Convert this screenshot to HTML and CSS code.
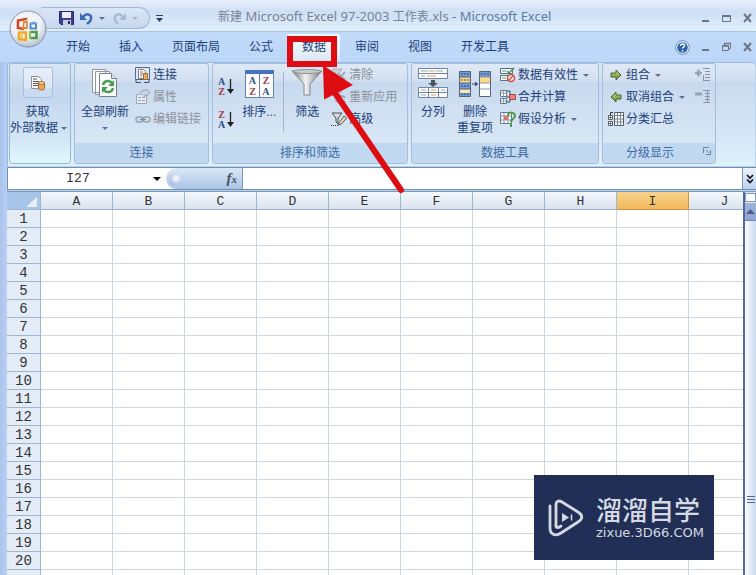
FILE: index.html
```html
<!DOCTYPE html>
<html lang="zh-CN">
<head>
<meta charset="utf-8">
<title>新建 Microsoft Excel 97-2003 工作表.xls - Microsoft Excel</title>
<link rel="stylesheet" href="styles.css">
</head>
<body>
<svg width="0" height="0" class="defs" aria-hidden="true">
  <defs>
    <linearGradient id="gray" x1="0" x2="1"><stop offset="0" stop-color="#6f7174"/><stop offset=".45" stop-color="#f4f4f2"/><stop offset="1" stop-color="#77787a"/></linearGradient>
    <linearGradient id="green" x1="0" y1="0" x2="0" y2="1"><stop offset="0" stop-color="#c5dc84"/><stop offset="1" stop-color="#5a8b28"/></linearGradient>
    <radialGradient id="orb" cx=".45" cy=".35" r=".7"><stop offset="0" stop-color="#fff"/><stop offset=".6" stop-color="#eceff4"/><stop offset="1" stop-color="#a9b5c8"/></radialGradient>
  </defs>
</svg>
<div class="window">
  <header class="titlebar">
    <div class="quick">
      <button aria-label="保存"><svg width="15" height="14" viewBox="0 0 15 14"><path d="M.5.5h14v13H2l-1.500-1.500z" fill="#3c3f98" stroke="#25276b"/><path d="M3 1h9v6H3z" fill="#e9f0fb"/><path d="M4 9h8v5H4z" fill="#c8cede"/><path d="M9 10h2v3H9z" fill="#25276b"/></svg></button>
      <button aria-label="撤消"><svg width="13" height="13" viewBox="0 0 13 13"><path d="M3 5c4-5 9-2 8 2-.5 3-3 4-4 5" fill="none" stroke="#3a69b8" stroke-width="2.400"/><path d="M0 1v7h7z" fill="#3a69b8"/></svg></button>
      <i class="caret"></i>
      <button aria-label="恢复"><svg width="13" height="13" viewBox="0 0 13 13"><path d="M10 5C6 0 1 3 2 7c.5 3 2 4 3 5" fill="none" stroke="#a9b9cf" stroke-width="2.400"/><path d="M13 1v7H6z" fill="#a9b9cf"/></svg></button>
      <i class="caret pale"></i>
    </div>
    <button class="more" aria-label="自定义快速访问工具栏"><svg width="7" height="7" viewBox="0 0 7 7"><path d="M0 .5h7" stroke="#294063"/><path d="M0 3h7L3.500 7z" fill="#294063"/></svg></button>
    <h1><span><b>新建</b> Microsoft Excel 97-2003 <b>工作表</b>.xls</span> - Microsoft Excel</h1>
    <div class="winbtns">
      <button aria-label="最小化"><svg width="8" height="10" viewBox="0 0 8 10"><path d="M0 8h7" stroke="#6c7583" stroke-width="2"/></svg></button>
      <button aria-label="最大化"><svg width="9" height="10" viewBox="0 0 9 10"><path d="M.5 2.500h8v6h-8z" fill="none" stroke="#6c7583"/><path d="M0 3h9" stroke="#6c7583" stroke-width="2"/></svg></button>
      <button aria-label="关闭"><svg width="9" height="10" viewBox="0 0 9 10"><path d="M1 1l7 8M8 1L1 9" stroke="#6c7583" stroke-width="2"/></svg></button>
    </div>
  </header>

  <button class="office" aria-label="Office 按钮"><svg width="38" height="38" viewBox="0 0 38 38">
    <circle cx="19" cy="19" r="18" fill="url(#orb)" stroke="#8494ae"/>
    <g fill="none" stroke-width="2.600">
      <path d="M17 10V9L9 10.500V18l6 1" stroke="#cf4b26"/><path d="M15 12h3v6h-4z" stroke="#e88443" stroke-width="1.800"/>
      <path d="M21.500 13.500h5.500v5h-5.500z" stroke="#4f86cf" stroke-width="2"/><path d="M21 14l4-2 3 2" stroke="#7da7df" stroke-width="1.500"/>
      <path d="M10 21.500v7.500l7 1v-7.500h-7" stroke="#eda92d"/><path d="M13 23v5" stroke="#f7cf50" stroke-width="2"/>
      <path d="M21.500 22h6v6h-7" stroke="#4f9a45"/><path d="M21 21v8" stroke="#8dbf52" stroke-width="2"/>
    </g></svg></button>

  <nav class="tabs">
    <a href="#">开始</a><a href="#">插入</a><a href="#">页面布局</a><a href="#">公式</a><a href="#" class="active">数据</a><a href="#">审阅</a><a href="#">视图</a><a href="#">开发工具</a>
    <div class="winbtns doc">
      <button aria-label="帮助"><svg width="15" height="15" viewBox="0 0 15 15"><circle cx="7.500" cy="7.500" r="6.800" fill="#fff" stroke="#5d87bd"/><circle cx="7.500" cy="7.500" r="5.300" fill="#2961b0"/><path d="M5.500 6c0-3 4.500-2.500 4 0-.3 1-2 1.200-2 2.600M7.500 10v1.500" fill="none" stroke="#fff" stroke-width="1.500"/></svg></button>
      <button aria-label="最小化窗口"><svg width="8" height="10" viewBox="0 0 8 10"><path d="M0 8h7" stroke="#6c7583" stroke-width="2"/></svg></button>
      <button aria-label="还原窗口"><svg width="9" height="10" viewBox="0 0 9 10"><path d="M.5 3.500h6v5h-6zM2.500 3V1.500h6v5H7" fill="none" stroke="#6c7583"/><path d="M0 4h7M2 1.500h7" stroke="#6c7583" stroke-width="1.500"/></svg></button>
      <button aria-label="关闭窗口"><svg width="9" height="10" viewBox="0 0 9 10"><path d="M1 1l7 8M8 1L1 9" stroke="#6c7583" stroke-width="2"/></svg></button>
    </div>
  </nav>

  <section class="ribbon">
    <div class="group external">
      <button class="big"><span class="frame"><svg width="16" height="16" viewBox="0 0 16 16"><path d="M1.500 1.500h7l3 3v9h-10z" fill="#fff" stroke="#8b8f96"/><path d="M3 4h4M3 6.500h6M3 8.500h5M3 10.500h5" stroke="#555"/><path d="M8.500 8v5.500c0 2 6 2 6 0V8" fill="#e8a85b" stroke="#a36a2c"/><ellipse cx="11.500" cy="8" rx="3" ry="1.500" fill="#f8d9a4" stroke="#a36a2c"/></svg></span>
      <span>获取</span><span>外部数据<i class="caret"></i></span></button>
    </div>

    <div class="group connect">
      <div class="body">
        <button class="big"><svg class="pic" width="26" height="30" viewBox="0 0 26 30"><path d="M.5 1.500h13v23H.5zM3.500 3.500h14v23h-14z" fill="#fff" stroke="#8d96a3"/><path d="M7.500 5.500h12l5 5v18h-17z" fill="#fff" stroke="#77808d"/><path d="M19.500 5.500v5h5" fill="#dbe3ee" stroke="#77808d"/><path d="M11 17c1-5 7-5 9-2M21 20c-1 5-7 5-9 2" fill="none" stroke="#46a04f" stroke-width="2.400"/><path d="M22 12v6h-6zM10 25v-6h6z" fill="#46a04f"/></svg><span>全部刷新</span><span class="drop"><i class="caret"></i></span></button>
        <div class="list">
          <button><svg width="16" height="16" viewBox="0 0 16 16"><path d="M.5.500h14v12H.5z" fill="#dce7f7" stroke="#506a94"/><path d="M3.500 2.500h5l2 2v7h-7z" fill="#fff" stroke="#8b7b65"/><path d="M5 5h3M5 7h3M5 9h2" stroke="#777"/><path d="M8.500 6.500h4v6h-4z" fill="#e8a85b" stroke="#a36a2c"/><path d="M1 13v2.500h5M14 12v3.500H9" fill="none" stroke="#34517e"/></svg>连接</button>
          <button class="off"><svg width="16" height="16" viewBox="0 0 16 16"><path d="M1.500 5.500h10v9h-10z" fill="#e8edf4" stroke="#9ba7b8"/><path d="M3 8.500h3M3 11.500h3M7 8.500h3M7 11.500h3" stroke="#96a3b6"/><path d="M5 4l3-3h5l2 2-3 4-2-1-1 3" fill="#c7d0dd" stroke="#97a4b7"/></svg>属性</button>
          <button class="off"><svg width="16" height="16" viewBox="0 0 16 16"><rect x="1" y="6" width="7" height="5" rx="2.500" fill="none" stroke="#9aa4b2" stroke-width="1.500"/><rect x="8" y="6" width="7" height="5" rx="2.500" fill="none" stroke="#9aa4b2" stroke-width="1.500"/><path d="M5 8.500h6" stroke="#7f8b9c" stroke-width="1.500"/></svg>编辑链接</button>
        </div>
      </div>
      <div class="caption">连接</div>
    </div>

    <div class="group sort">
      <div class="body">
        <div class="az">
          <button aria-label="升序"><span class="ab"><b>A</b><b class="z">Z</b></span><svg width="7" height="16" viewBox="0 0 7 16"><path d="M3.500 0v12" stroke="#222" stroke-width="1.300"/><path d="M0 10h7l-3.500 5z" fill="#222"/></svg></button>
          <button aria-label="降序"><span class="ab"><b class="z">Z</b><b>A</b></span><svg width="7" height="16" viewBox="0 0 7 16"><path d="M3.500 0v12" stroke="#222" stroke-width="1.300"/><path d="M0 10h7l-3.500 5z" fill="#222"/></svg></button>
        </div>
        <button class="big"><span class="pic sortpic"><b>A</b><b class="z">Z</b><b class="z">Z</b><b>A</b></span><span>排序...</span></button>
        <i class="sep"></i>
        <button class="big"><svg class="pic" width="32" height="30" viewBox="0 0 32 30"><path d="M1 3h30L19 16v11h-6V16z" fill="url(#gray)" stroke="#85888c"/><ellipse cx="16" cy="3.500" rx="14" ry="2" fill="#c9cbcd" stroke="#8f9296"/></svg><span>筛选</span></button>
        <div class="list">
          <button class="off"><svg width="16" height="16" viewBox="0 0 16 16"><path d="M1 2h10L7 7v6H5V7z" fill="#cdd4df" stroke="#a2adbc"/><path d="M7 6l7 7M14 5l-7 8" stroke="#9fb0c8" stroke-width="2"/></svg>清除</button>
          <button class="off"><svg width="16" height="16" viewBox="0 0 16 16"><path d="M1 2h10L7 7v6H5V7z" fill="#cdd4df" stroke="#a2adbc"/><path d="M8 9c2-3 5-2 6 0M14 12c-2 3-5 2-6 0" fill="none" stroke="#9aa5b4" stroke-width="2"/></svg>重新应用</button>
          <button><svg width="16" height="16" viewBox="0 0 16 16"><path d="M1 2h10L7 7v6L5 11V7z" fill="#ddd" stroke="#4a4d50"/><path d="M8 12l5-7 2.500 2-5 6-3 1z" fill="#e7e3b5" stroke="#555"/><path d="M0 14.500h7" stroke="#333" stroke-dasharray="1 1"/></svg>高级</button>
        </div>
      </div>
      <div class="caption">排序和筛选</div>
    </div>

    <div class="group tools">
      <div class="body">
        <button class="big"><svg class="pic" width="30" height="32" viewBox="0 0 30 32"><path d="M.5 1.500h29v10H.5zM.5 20.500h29v10H.5z" fill="#fff" stroke="#7385a5"/><path d="M.5 6.500h29M.5 25.500h29M10.500 20v10M20.500 20v10" stroke="#7385a5"/><path d="M3 4h7M18 4h7M3 9h4M3 23h5M23 23h4M3 28h5" stroke="#8ca8d4"/><path d="M11 4h6M9 9h9M13 23h5M13 28h5" stroke="#e7a05c"/><path d="M13 13h4v3h3l-5 4-5-4h3z" fill="#4c5566"/></svg><span>分列</span></button>
        <button class="big"><svg class="pic" width="34" height="32" viewBox="0 0 34 32"><path d="M1.500 4.500h11v25h-11z" fill="#7198d8" stroke="#53647e"/><path d="M2 10h10v6H2z" fill="#ffda86"/><path d="M2 22h10v4H2z" fill="#f8eaa9"/><path d="M1.500 10h11M1.500 16h11M1.500 22h11" stroke="#53647e"/><path d="M3 7h8M3 13h8M3 19h8M3 27h8" stroke="#38507b" stroke-dasharray="2 1"/><path d="M14 17h6" stroke="#34517e"/><path d="M17 14.500l3 2.500-3 2.500z" fill="#34517e"/><path d="M21.500 4.500h11v25h-11z" fill="#fff" stroke="#53647e"/><path d="M22 5h10v5H22z" fill="#7198d8"/><path d="M22 10h10v6H22z" fill="#ffda86"/><path d="M21.500 10h11M21.500 16h11M21.500 22h11" stroke="#8794aa"/><path d="M23 7h8" stroke="#38507b" stroke-dasharray="2 1"/></svg><span>删除</span><span>重复项</span></button>
        <div class="list">
          <button><svg width="16" height="16" viewBox="0 0 16 16"><path d="M.5 1.500h12v5H.5zM.5 8.500h12v5H.5z" fill="#fff" stroke="#56718f"/><path d="M2 4h4M2 11h4" stroke="#4b9b50"/><path d="M7 4l2 2 5-5" fill="none" stroke="#349448" stroke-width="1.500"/><circle cx="11" cy="11" r="3.500" fill="#fff" stroke="#ce4a3c" stroke-width="1.500"/><path d="M9 13l4-4" stroke="#ce4a3c" stroke-width="1.500"/></svg>数据有效性<i class="caret"></i></button>
          <button><svg width="16" height="16" viewBox="0 0 16 16"><path d="M.5 1.500h6v6h-6zM.5 9.500h6v5h-6z" fill="#fff" stroke="#667992"/><path d="M1 4h5M3.500 2v5M1 12h5M3.500 10v4" stroke="#90a1b8"/><path d="M7 2h3v3M7 13h3v-2M6 8h4" fill="none" stroke="#344f7b"/><path d="M9.500 5.500h6v5h-6z" fill="#e58778" stroke="#b44336"/></svg>合并计算</button>
          <button><svg width="16" height="16" viewBox="0 0 16 16"><path d="M.5 1.500h11v11H.5z" fill="#fff" stroke="#667992"/><path d="M1 5h10M1 9h10M4 2v10M8 2v10" stroke="#8293aa"/><path d="M4 5h4v4H4z" fill="#d8756a"/><path d="M8 5c0-5 7-4 7 0-.3 3-4 3-4 6M11 13v3" fill="none" stroke="#4f9a45" stroke-width="2"/></svg>假设分析<i class="caret"></i></button>
        </div>
      </div>
      <div class="caption">数据工具</div>
    </div>

    <div class="group outline">
      <div class="body">
        <div class="list">
          <button><svg width="16" height="16" viewBox="0 0 16 16"><path d="M3 6h5V3l5 5-5 5v-3H3z" fill="url(#green)" stroke="#4b6333"/></svg>组合<i class="caret"></i></button>
          <button><svg width="16" height="16" viewBox="0 0 16 16"><path d="M13 6H8V3L3 8l5 5v-3h5z" fill="url(#green)" stroke="#4b6333"/></svg>取消组合<i class="caret"></i></button>
          <button><svg width="16" height="16" viewBox="0 0 16 16"><path d="M.5 4.500h4v4h-4zM.5 10.500h4v4h-4zM6.500 1.500h9v13h-9z" fill="#fff" stroke="#555e6b"/><path d="M7 4.500h8M7 8h8M7 11h8M9.500 2v12M12.500 2v12" stroke="#7d8794"/><path d="M1.500 6.500h2M2.500 5.500v2M1.500 12.500h2M2.500 11.500v2M2.500 4V1.500H5" fill="none" stroke="#333"/></svg>分类汇总</button>
        </div>
        <div class="list detail">
          <button aria-label="显示明细数据"><svg width="16" height="16" viewBox="0 0 16 16"><circle cx="3.500" cy="6" r="2.500" fill="#a9b4c4"/><path d="M0 6h7M3.500 2.500v7" stroke="#98a4b5" stroke-width="2"/><path d="M8 1.500h7M10 4.500h5M10 7.500h5M10 10.500h5M8 13.500h7M8.500 8v5" stroke="#8895aa"/></svg></button>
          <button aria-label="隐藏明细数据"><svg width="16" height="16" viewBox="0 0 16 16"><path d="M0 5h7" stroke="#98a4b5" stroke-width="3"/><path d="M8 1.500h7M10 4.500h5M10 7.500h5M10 10.500h5M8 13.500h7M12.500 2v11" stroke="#8895aa"/></svg></button>
        </div>
      </div>
      <div class="caption">分级显示<button class="launch" aria-label="分级显示设置"><svg width="8" height="8" viewBox="0 0 8 8"><path d="M.5 6V.5H6M7.500 3v4.500H3M3 3l3 3" fill="none" stroke="#6b84a8"/></svg></button></div>
    </div>
  </section>

  <div class="formula">
    <input class="name" aria-label="名称框" value="I27">
    <button class="pick" aria-label="选择名称"><i class="caret"></i></button>
    <button class="fx" aria-label="插入函数"><i class="ball"></i><em>f<small>x</small></em></button>
    <input class="expr" aria-label="编辑栏">
    <button class="expand" aria-label="展开编辑栏"><svg width="8" height="10" viewBox="0 0 8 10"><path d="M1 1l3 3 3-3M1 5.500l3 3 3-3" fill="none" stroke="#111" stroke-width="1.600"/></svg></button>
  </div>

  <main class="sheet">
    <div class="cells"><table><thead><tr id="cols"></tr></thead><tbody id="rows"></tbody></table></div>
    <div class="scroll"><i class="split"></i><button class="up" aria-label="向上滚动"><svg width="9" height="5" viewBox="0 0 9 5"><path d="M0 5l4.500-5L9 5z" fill="#4b5d8f"/></svg></button><div class="thumb"><i class="grip"></i></div></div>
  </main>

  <svg class="mark" width="120" height="165" viewBox="0 0 120 165"><path d="M3 3h44v25H3z" fill="none" stroke="#dd0d12" stroke-width="6"/><path d="M48 57l66 97" stroke="#dd0d12" stroke-width="6" stroke-linecap="round"/><path d="M37 31l27 18-26 13z" fill="#dd0d12" stroke="#dd0d12" stroke-width="2"/></svg>

  <aside class="brand">
    <svg width="36" height="38" viewBox="0 0 36 38" fill="none" stroke="#d5d9e1" stroke-width="2.800" stroke-linecap="round" stroke-linejoin="round"><path d="M8 27V6c0-4 3-5 6-3l16 10c5 3 5 7 0 10L13 34c-6 4-11 1-11-5V7"/><path d="M8 27c0 2 3 2 5 0"/><path d="M14 14l7 4.500-7 4.500z" fill="#d5d9e1" stroke="none"/><path d="M23.500 16v5" stroke-width="1.500"/></svg>
    <div><strong>溜溜自学</strong><span>zixue.3D66.COM</span></div>
  </aside>
</div>
<script src="sheet.js"></script>
</body>
</html>
```
FILE: sheet.js
```js
const letters = 'ABCDEFGHIJ'.split('');
const lastRow = 20;
document.getElementById('cols').innerHTML = '<th class="corner"></th>' +
  letters.map(c => `<th${c === 'I' ? ' class="current"' : ''}>${c}</th>`).join('');
document.getElementById('rows').innerHTML = Array.from({ length: lastRow + 1 }, (_, r) =>
  `<tr><th>${r < lastRow ? r + 1 : ''}</th>${'<td></td>'.repeat(letters.length)}</tr>`).join('');
```
FILE: styles.css
```css
* { box-sizing: border-box; }
html, body { height: 100%; }
body {
  margin: 0;
  overflow: hidden;
  font: 12px/16px "Liberation Sans", "Noto Sans CJK SC", sans-serif;
  color: #1c3f78;
  background: #bdd6f6;
}
button, input { font: inherit; color: inherit; padding: 0; margin: 0; border: 0; background: none; border-radius: 0; }
button { display: flex; align-items: center; justify-content: center; white-space: nowrap; }
svg { display: block; flex: none; }
.defs { position: absolute; }
.window { position: relative; display: flex; flex-direction: column; height: 100vh; padding-left: 7px; background: linear-gradient(90deg, #a9c3ec 0, #b9d0f5 7px, #b9d2f4 8px); }
.caret { flex: none; display: inline-block; border: 3px solid transparent; border-top-color: #5b6f92; border-bottom: 0; }
.caret.pale { border-top-color: #a9b6ca; }

.titlebar { display: flex; align-items: center; height: 32px; margin-left: -7px; padding: 5px 4px 0 41px; border-bottom: 1px solid #a9c4e6; background: linear-gradient(#e6effb 0, #cfdff4 12px, #d6e6f8 20px, #e2f0fb 32px); }
.quick { display: flex; align-items: center; gap: 6px; height: 22px; width: 109px; padding-left: 17px; border: 1px solid #a5b9d7; border-left-color: transparent; border-radius: 0 11px 11px 0; background: linear-gradient(#dbe6f5, #c5d7ef); }
.quick button + .caret { margin-right: 2px; }
.more { margin-left: 6px; }
h1 { flex: 1; margin: 0 0 4px 55px; font: 13px/18px "Noto Sans", "Noto Sans CJK SC", sans-serif; color: #5b7ba7; white-space: nowrap; }
h1 span { color: #788392; }
h1 b { font-size: 12px; font-weight: normal; }
.winbtns { display: flex; align-items: center; gap: 12px; }

.office { position: absolute; left: 9px; top: 10px; }

.tabs { display: flex; align-items: center; height: 30px; margin-left: -7px; padding: 0 4px 0 51px; background: linear-gradient(#c3dbfb, #bbd6f8); }
.tabs a { height: 27px; padding: 5px 14px 0 15px; line-height: 16px; color: #1c3f78; text-decoration: none; white-space: nowrap; }
.tabs .active { background: linear-gradient(#fbfdff, #dce8f6); border-radius: 3px 3px 0 0; }
.doc { margin-left: auto; }

.ribbon { display: flex; gap: 3px; height: 104px; margin-right: 1px; padding: 0 2px 2px 1px; border: 1px solid #9dbbdc; border-width: 1px 0 0 1px; border-radius: 4px 4px 0 0; background: linear-gradient(#dce8f6 0, #d0def0 18px, #c9daee 19px, #d8e8f6 80px, #dff2fb); }
.group { display: flex; flex-direction: column; height: 101px; border: 1px solid #a4bfdd; border-radius: 3px; background: linear-gradient(#dfe9f6 0, #d3dff0 17px, #c8d9ee 18px, #dae8f6 82px); overflow: hidden; }
.external { flex: 0 0 62px; align-items: center; padding-top: 3px; border-color: #91bcd6; background: linear-gradient(#d9e6f5 0, #c4d6ed 30px, #d2e6f6 75px, #e2f7fc); }
.connect { flex: 0 0 135px; }
.sort { flex: 0 0 196px; }
.tools { flex: 0 0 188px; }
.outline { flex: 0 0 114px; }
.body { flex: 1; display: flex; padding: 0 0 0 6px; }
.caption { flex: 0 0 20px; display: flex; align-items: center; justify-content: center; position: relative; background: #c1d8f1; color: #42699f; }
.outline .caption { padding-right: 18px; }
.launch { position: absolute; right: 4px; top: 4px; }

.big { flex-direction: column; justify-content: flex-start; align-self: flex-start; }
.big > span:not(.frame, .pic) { display: flex; align-items: center; gap: 3px; }
.big .pic { margin: 4px 0 6px; }
.external .caret { margin-right: -2px; }
.frame { display: flex; align-items: center; justify-content: center; width: 30px; height: 31px; margin: 0 0 6px; border: 1px solid #aac0de; border-radius: 2px; background: linear-gradient(#e7eef8 0, #dbe6f4 20px, #c8dbf0 21px); }
.drop { height: 16px; }
.list { display: flex; flex-direction: column; margin-left: 6px; }
.list button { height: 22px; gap: 2px; justify-content: flex-start; }
.list .caret { margin-left: 3px; }
.off { color: #8d929b; }

.az { display: flex; flex-direction: column; gap: 13px; padding: 13px 8px 0 0; }
.az button { gap: 2px; height: 20px; }
.ab { display: flex; flex-direction: column; }
.ab b { font: bold 10px/10px "Liberation Serif", serif; color: #2d4f8d; }
.ab .z, .sortpic .z { color: #a23a45; }
.sortpic { display: grid; grid-template-columns: 1fr 1fr; width: 29px; height: 28px; padding-top: 2px; border: 1px solid #6580ae; border-top: 4px solid #4672c0; background: linear-gradient(90deg, #fff 13px, #6580ae 13px, #6580ae 14px, #fff 14px); font: bold 10px/10px "Liberation Serif", serif; color: #2d4f8d; }
.sortpic b { line-height: 10px; text-align: center; }
.sort .sortpic { margin: 6px 0; }
.sort .body { padding-left: 5px; }
.sep { width: 1px; height: 60px; margin: 8px 7px; background: #9fb7d5; }
.sort .list { margin-left: 8px; }
.sort .big .pic { margin-bottom: 6px; }
.tools .pic { margin: 3px 0 5px; }
.tools .body { gap: 9px; }
.tools .list { margin-left: -2px; }
.outline .list { margin-left: 0; }
.outline .body { justify-content: space-between; padding: 0 4px 0 5px; }

.formula { display: flex; height: 23px; margin-top: 1px; border: 1px solid #6f8faf; border-right: 0; background: #fff; }
.name { width: 140px; padding-top: 1px; text-align: center; font: 13px/20px "Liberation Mono", monospace; color: #333; background: #fff; }
.pick { width: 18px; }
.pick .caret { border-width: 4px; border-bottom: 0; border-top-color: #000; }
.fx { flex: 0 0 77px; justify-content: space-between; padding: 0 5px 0 3px; border-right: 1px solid #7897bb; border-radius: 11px 0 0 11px; background: linear-gradient(#dce8f7, #a9c3e6); }
.ball { width: 12px; height: 12px; border-radius: 6px; background: radial-gradient(circle at 60% 40%, #fff, #b9cbe3 60%, #8aa3c5); }
.fx em { font: italic bold 15px/18px "Liberation Serif", serif; color: #46515f; }
.fx small { font-size: 11px; }
.expr { flex: 1; min-width: 0; background: #fff; }
.expand { width: 14px; border-left: 1px solid #7897bb; background: linear-gradient(#eaf2fc, #bcd1ee); }

.sheet { flex: 1; min-height: 0; display: flex; margin-top: 1px; border-top: 1px solid #7d98b5; background: #fff; }
.cells { flex: 1; min-width: 0; overflow: hidden; }
table { width: 754px; table-layout: fixed; border-collapse: separate; border-spacing: 0; }
th, td { width: 72px; height: 18px; padding: 0; border: solid #ccd5e0; border-width: 0 1px 1px 0; }
th { padding-top: 2px; font: 14px/15px "Liberation Mono", monospace; color: #333; background: #e3ecf7; border-color: #9eb6ce; }
thead th { font-size: 13px; background: linear-gradient(#f4f8fc, #d9e2ee); }
tbody th { text-align: center; }
th:first-child { width: 34px; }
thead .corner { background: linear-gradient(135deg, transparent 50%, #e7eff9 50%) 20px 5px / 10px 10px no-repeat, #a9c4e9; }
thead .current { background: linear-gradient(#f8d28d, #f0b95c); border-color: #cf9443; }
.scroll { flex: 0 0 13px; display: flex; flex-direction: column; border-left: 2px solid #5668a5; background: #d8e4f3; }
.split { height: 9px; margin: 1px 0; border: 1px solid #8499b8; background: #fff; }
.up { height: 17px; background: linear-gradient(#9fb4da, #8ea5d0); }
.thumb { flex: 1; display: flex; align-items: center; justify-content: center; padding-top: 204px; background: linear-gradient(90deg, #fafcff, #cad8ec); border-top: 1px solid #7187b4; }
.grip { width: 8px; height: 8px; background: repeating-linear-gradient(#53698f 0, #53698f 1px, transparent 1px, transparent 3px); }

.mark { position: absolute; left: 287px; top: 36px; pointer-events: none; }
.brand { position: absolute; right: 42px; bottom: 15px; display: flex; align-items: center; gap: 12px; width: 180px; height: 85px; padding-left: 14px; background: #212f56; color: #d5d9e1; }
.brand div { display: flex; flex-direction: column; gap: 4px; }
.brand strong { font: 500 26px/26px "Noto Sans CJK SC", sans-serif; }
.brand span { font: 13px/14px "DejaVu Sans", sans-serif; }
```
